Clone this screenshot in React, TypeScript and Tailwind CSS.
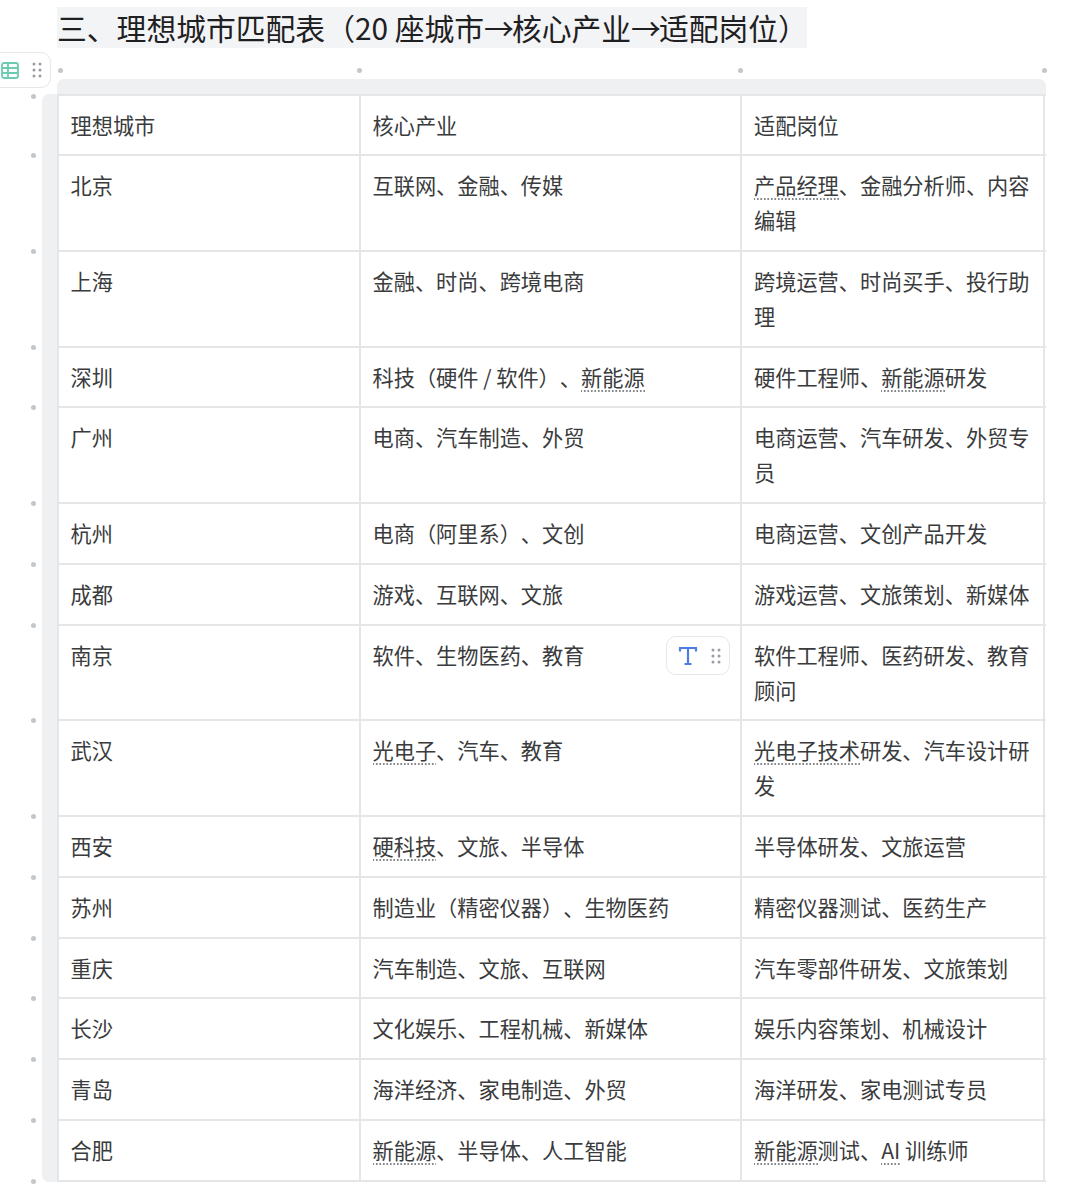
const rows: [string, string, string, number][] = [
  ["理想城市", "核心产业", "适配岗位", 60],
  ["北京", "互联网、金融、传媒", "<产品经理>、金融分析师、内容编辑", 96],
  ["上海", "金融、时尚、跨境电商", "跨境运营、时尚买手、投行助理", 96],
  ["深圳", "科技（硬件 / 软件）、<新能源>", "硬件工程师、<新能源>研发", 60],
  ["广州", "电商、汽车制造、外贸", "电商运营、汽车研发、外贸专员", 96],
  ["杭州", "电商（阿里系）、文创", "电商运营、文创产品开发", 61],
  ["成都", "游戏、互联网、文旅", "游戏运营、文旅策划、新媒体", 61],
  ["南京", "软件、生物医药、教育", "软件工程师、医药研发、教育顾问", 95],
  ["武汉", "<光电子>、汽车、教育", "<光电子技术>研发、汽车设计研发", 96],
  ["西安", "<硬科技>、文旅、半导体", "半导体研发、文旅运营", 61],
  ["苏州", "制造业（精密仪器）、生物医药", "精密仪器测试、医药生产", 61],
  ["重庆", "汽车制造、文旅、互联网", "汽车零部件研发、文旅策划", 60],
  ["长沙", "文化娱乐、工程机械、新媒体", "娱乐内容策划、机械设计", 61],
  ["青岛", "海洋经济、家电制造、外贸", "海洋研发、家电测试专员", 61],
  ["合肥", "<新能源>、半导体、人工智能", "<新能源>测试、<AI> 训练师", 61],
];

const Grip = () => (
  <svg width="10" height="16" viewBox="0 0 10 16" fill="#9a9da3">
    {[2, 8, 14].map((y) => (
      <g key={y}>
        <circle cx="2" cy={y} r="1.5" />
        <circle cx="8" cy={y} r="1.5" />
      </g>
    ))}
  </svg>
);

function Rich({ text }: { text: string }) {
  const parts = text.split(/(<[^>]+>)/).filter(Boolean);
  return (
    <>
      {parts.map((p, i) =>
        p.startsWith("<") ? (
          <span key={i} className="bg-[radial-gradient(circle,#85888d_0.7px,transparent_1px)] bg-[length:3.5px_2px] bg-[position:2px_100%] bg-repeat-x">
            {p.slice(1, -1)}
          </span>
        ) : (
          <span key={i}>{p}</span>
        ),
      )}
    </>
  );
}

const rowLines = [96, 155, 251, 347, 407, 503, 564, 625, 720, 816, 877, 938, 998, 1059, 1120, 1181];
const topDots = [60, 359, 740, 1044];

export default function App() {
  return (
    <div className="relative h-[1200px] w-[1080px] overflow-hidden bg-white font-['PingFang_SC','Noto_Sans_CJK_SC',sans-serif] text-[#3a3b3d] [text-spacing-trim:space-all]">
      <div className="pl-[57px] pt-[7px]">
        <h1 className="h-[41px] w-[750px] whitespace-nowrap bg-[#f3f4f6] text-[29.8px] font-normal leading-[40px] text-[#1f2022]">
          三、理想城市匹配表（20 座城市<span className="tracking-[-2px]">→</span>核心产业<span className="tracking-[-2px]">→</span>适配岗位）
        </h1>
        <div className="mt-[31px] h-[15px] w-[989px] rounded-t-[7px] bg-[#eef0f1]" />
        <div className="ml-[-15px] flex w-[1004px]">
          <div className="w-[15px] shrink-0 rounded-l-[7px] bg-[#eef0f1]" />
          <div className="w-[989px] border-l-2 border-t-2 border-[#e4e6e8]">
            {rows.map(([a, b, c, h]) => (
              <div key={a} style={{ height: h }} className="grid grid-cols-[300px_381px_305px] border-b-2 border-[#e4e6e8] text-[21.2px] leading-[35px]">
                <div className="pl-[11.5px] pr-[12px] pt-[10.5px]"><Rich text={a} /></div>
                <div className="border-l-2 border-[#e4e6e8] pl-[11.5px] pr-[12px] pt-[10.5px]"><Rich text={b} /></div>
                <div className="border-x-2 border-[#e4e6e8] pl-[12px] pr-[8px] pt-[10.5px]"><Rich text={c} /></div>
              </div>
            ))}
          </div>
        </div>
      </div>

      {topDots.map((x) => (
        <span key={x} style={{ left: x - 2, top: 68 }} className="absolute h-[5px] w-[5px] rounded-full bg-[#c4c6c9]" />
      ))}
      {rowLines.map((y) => (
        <span key={y} style={{ left: 31, top: y - 2 }} className="absolute h-[5px] w-[5px] rounded-full bg-[#c4c6c9]" />
      ))}

      <div className="absolute left-[-10px] top-[52px] flex h-[36px] w-[61px] items-center rounded-[10px] border border-[#e6e7e9] bg-white pl-[10px]">
        <svg width="18" height="17" viewBox="0 0 18 17" fill="none" stroke="#6ccbb0" strokeWidth="1.8">
          <rect x="1" y="1" width="16" height="15" rx="2" />
          <path d="M1 6h16M1 11h16M7 1v15" />
        </svg>
        <span className="ml-[13px]"><Grip /></span>
      </div>

      <div className="absolute left-[666px] top-[636px] flex h-[39px] w-[64px] items-center rounded-[10px] border border-[#e6e7e9] bg-white pl-[11px]">
        <svg width="20" height="20" viewBox="0 0 20 20" fill="none" stroke="#4f7de8" strokeWidth="2.2">
          <path d="M2 5.5V2h16v3.5M10 2v16M6.5 18h7" />
        </svg>
        <span className="ml-[13px]"><Grip /></span>
      </div>
    </div>
  );
}
